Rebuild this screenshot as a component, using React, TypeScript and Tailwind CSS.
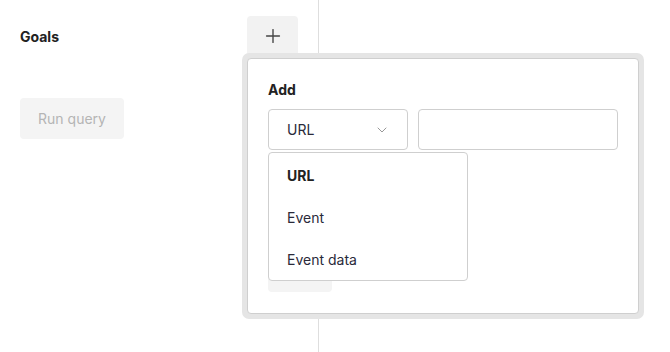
import { Plus, ChevronDown } from "lucide-react";

const font = { fontFamily: "Inter, 'Noto Sans', sans-serif" };

const options = ["URL", "Event", "Event data"];

export default function App() {
  return (
    <div
      className="relative w-[670px] h-[352px] bg-white overflow-hidden text-[#222]"
      style={font}
    >
      <div className="w-[319px] h-full border-r border-[#dedede] px-5 pt-4">
        <div className="flex items-center justify-between h-10">
          <span className="text-[14px] font-bold">Goals</span>
          <button className="w-[51px] h-10 rounded bg-[#f2f2f2] flex items-center justify-center text-[#444]">
            <Plus className="w-[22px] h-[22px]" strokeWidth={1.5} />
          </button>
        </div>
        <button className="mt-[42px] w-[104px] h-[41px] rounded bg-[#f4f4f4] text-[14px] text-[#b5b5b5]">
          Run query
        </button>
      </div>

      {/* popup */}
      <div className="absolute left-[242px] top-[53px] w-[402px] h-[266px] rounded-[7px] bg-[#e5e5e5] p-[5px]">
        <div className="relative h-full rounded-[4px] border border-[#cfcfcf] bg-white px-5 pt-[21px]">
          <div className="text-[14px] font-bold leading-5">Add</div>
          <div className="mt-[9px] flex gap-[10px]">
            <div className="w-[140px] h-[41px] rounded border border-[#cfcfcf] flex items-center justify-between pl-[18px] pr-[17px] text-[14px] text-[#2a2a3a]">
              <span>URL</span>
              <ChevronDown className="w-4 h-4 text-[#888]" strokeWidth={1.3} />
            </div>
            <div className="w-[200px] h-[41px] rounded border border-[#cfcfcf]" />
          </div>
          <div className="mt-[102px] w-16 h-10 rounded bg-[#f4f4f4]" />

          <div className="absolute left-5 top-[93px] w-[200px] rounded border border-[#cfcfcf] bg-white pt-px text-[14px] text-[#2a2a3a]">
            {options.map((o, i) => (
              <div
                key={o}
                className={`h-[42px] flex items-center pl-[18px] ${i === 0 ? "font-bold text-[#222]" : ""}`}
              >
                {o}
              </div>
            ))}
          </div>
        </div>
      </div>
    </div>
  );
}
